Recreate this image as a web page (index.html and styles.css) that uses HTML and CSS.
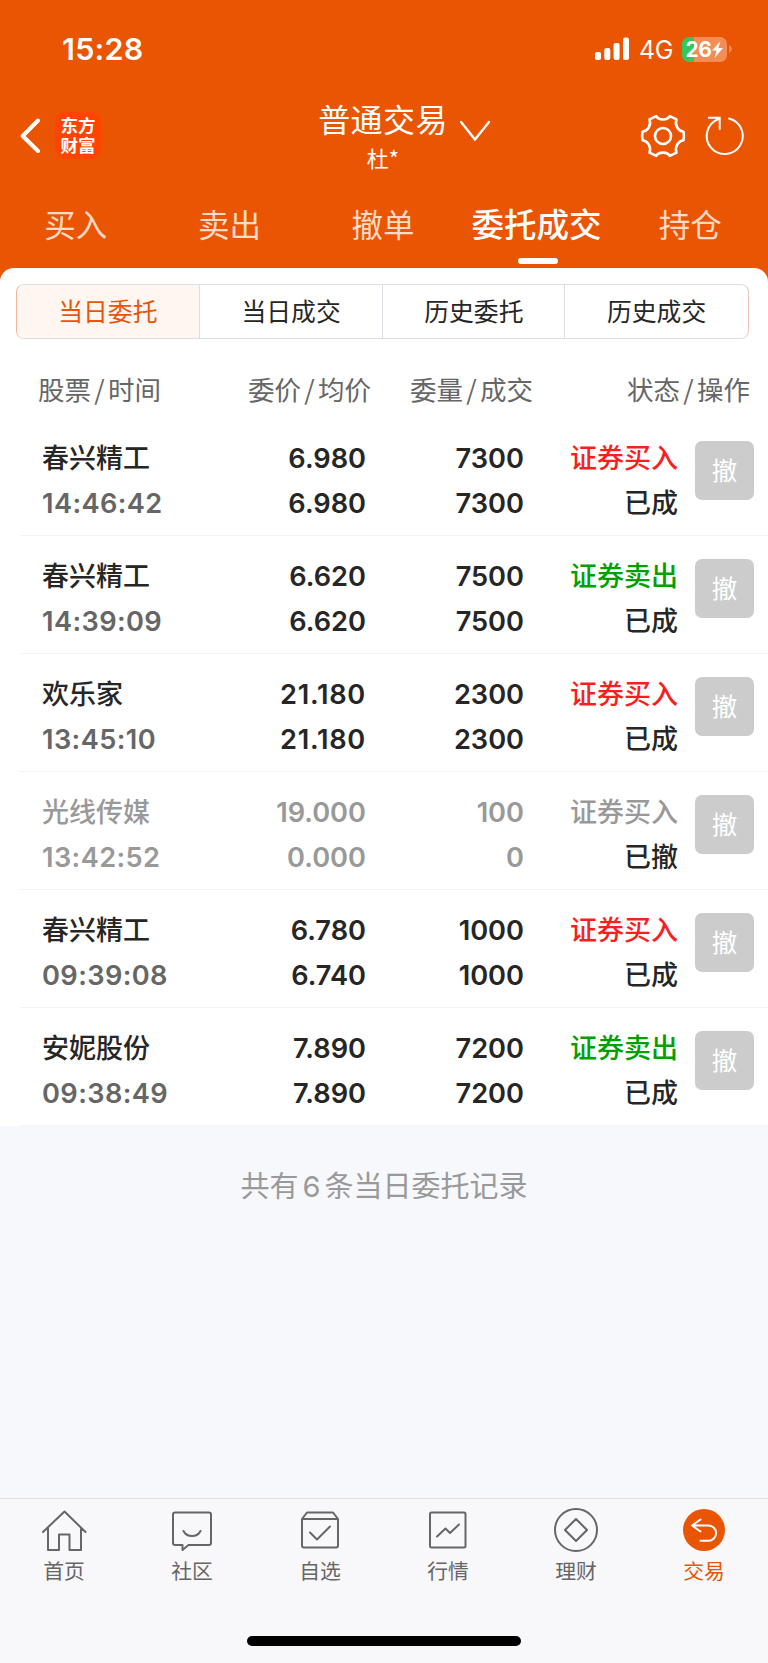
FILE: index.html
```html
<!DOCTYPE html>
<html lang="zh-CN">
<head>
<meta charset="utf-8">
<title>普通交易</title>
<link rel="stylesheet" href="styles.css">
</head>
<body>
<div class="app">
  <header class="top">
    <div class="status-bar">
      <span class="clock">15:28</span>
      <div class="status-right">
        <svg class="signal" width="34" height="24" viewBox="0 0 34 24" fill="#fff"><rect x="0" y="15" width="6" height="8" rx="2"/><rect x="9.3" y="11" width="6" height="12" rx="2"/><rect x="18.6" y="6" width="6" height="17" rx="2"/><rect x="28" y="0.5" width="6" height="22.5" rx="2"/></svg>
        <span class="network">4G</span>
        <div class="battery"><span class="battery-num">26</span><svg width="11" height="17" viewBox="0 0 11 17"><path d="M8.5 0L0 9.5h4.5L2.5 17 11 7H6.3z" fill="#fff"/></svg></div>
        <svg class="battery-cap" width="3" height="8" viewBox="0 0 3 8"><path d="M0 0Q3 1.5 3 4T0 8z" fill="#f38d55"/></svg>
      </div>
    </div>
    <div class="nav">
      <div class="nav-left">
        <svg width="20" height="36" viewBox="0 0 20 36"><path d="M18 2.5L2.7 18 18 33" fill="none" stroke="#fff" stroke-width="4" stroke-linecap="round" stroke-linejoin="round"/></svg>
        <div class="logo"><span>东方</span><span>财富</span></div>
      </div>
      <div class="nav-title"><span class="title">普通交易</span><span class="user">杜*</span></div>
      <svg class="chevron" width="32" height="22" viewBox="0 0 32 22"><path d="M2 2L16 19.500 30 2" fill="none" stroke="#fff" stroke-width="2.4" stroke-linecap="round" stroke-linejoin="round"/></svg>
      <div class="nav-right">
        <svg width="46" height="46" viewBox="0 0 46 46" fill="none" stroke="#fff" stroke-width="2.6" stroke-linejoin="round"><circle cx="23" cy="23" r="8"/><path d="M16.200 3.200C18.500 7.500 27.500 7.500 29.800 3.200L36.500 6.400C34.500 12 38 18 43.500 18.800Q44.300 23 43.500 27.200C38 28 34.500 34 36.500 39.600L29.800 42.800C27.500 38.500 18.500 38.500 16.200 42.800L9.500 39.600C11.500 34 8 28 2.500 27.200Q1.700 23 2.500 18.800C8 18 11.500 12 9.500 6.400Z"/></svg>
        <svg width="42" height="42" viewBox="0 0 42 42" fill="none" stroke="#fff" stroke-width="2" stroke-linecap="round"><path d="M25 5.500A18 18 0 1 1 14 6.300M4.800 4.700H15.700V16"/></svg>
      </div>
    </div>
    <nav class="tabs"><span>买入</span><span>卖出</span><span>撤单</span><span class="active">委托成交</span><span>持仓</span></nav>
  </header>
  <main class="card">
    <div class="segments"><span class="selected">当日委托</span><span>当日成交</span><span>历史委托</span><span>历史成交</span></div>
    <div class="head"><span>股票<i>/</i>时间</span><span>委价<i>/</i>均价</span><span>委量<i>/</i>成交</span><span>状态<i>/</i>操作</span></div>
    <div class="row"><div class="stock"><b>春兴精工</b><time>14:46:42</time></div><div class="num">6.980<br>6.980</div><div class="num">7300<br>7300</div><div class="state"><b class="buy">证券买入</b><b>已成</b></div><button class="cancel">撤</button></div>
    <div class="row"><div class="stock"><b>春兴精工</b><time>14:39:09</time></div><div class="num">6.620<br>6.620</div><div class="num">7500<br>7500</div><div class="state"><b class="sell">证券卖出</b><b>已成</b></div><button class="cancel">撤</button></div>
    <div class="row"><div class="stock"><b>欢乐家</b><time>13:45:10</time></div><div class="num wide">21.180<br>21.180</div><div class="num">2300<br>2300</div><div class="state"><b class="buy">证券买入</b><b>已成</b></div><button class="cancel">撤</button></div>
    <div class="row void"><div class="stock"><b>光线传媒</b><time>13:42:52</time></div><div class="num">19.000<br>0.000</div><div class="num">100<br>0</div><div class="state"><b class="buy">证券买入</b><b>已撤</b></div><button class="cancel">撤</button></div>
    <div class="row"><div class="stock"><b>春兴精工</b><time>09:39:08</time></div><div class="num">6.780<br>6.740</div><div class="num">1000<br>1000</div><div class="state"><b class="buy">证券买入</b><b>已成</b></div><button class="cancel">撤</button></div>
    <div class="row"><div class="stock"><b>安妮股份</b><time>09:38:49</time></div><div class="num">7.890<br>7.890</div><div class="num">7200<br>7200</div><div class="state"><b class="sell">证券卖出</b><b>已成</b></div><button class="cancel">撤</button></div>
  </main>
  <p class="summary">共有<i>6</i>条当日委托记录</p>
  <footer class="bottom">
    <div class="items">
      <div class="item"><svg viewBox="0 0 48 48"><path d="M3 25L24.500 4.500 45.500 25M8 21.500V43H19V27.500H29.500V43H41V21.500"/></svg><span>首页</span></div>
      <div class="item"><svg viewBox="0 0 48 48"><path d="M7 5.500H41Q43 5.500 43 7.500V36Q43 38 41 38H20.500L14.500 43V38H7Q5 38 5 36V7.500Q5 5.500 7 5.500ZM15.500 24Q18 29 24 29T32.500 24"/></svg><span>社区</span></div>
      <div class="item"><svg viewBox="0 0 48 48"><path d="M6 12L11 5.500H37L42 12V38.500Q42 40.500 40 40.500H8Q6 40.500 6 38.500ZM6 12H42M14 25.500L21 32.500 34 19.500"/></svg><span>自选</span></div>
      <div class="item"><svg viewBox="0 0 48 48"><rect x="6" y="5.500" width="35.500" height="35" rx="1.500"/><path d="M13 29.500L21.500 21.500 26 26 35 17.500"/></svg><span>行情</span></div>
      <div class="item"><svg viewBox="0 0 48 48"><circle cx="24" cy="23" r="21"/><path d="M24 12L35 23 24 34 13 23Z"/></svg><span>理财</span></div>
      <div class="item on"><svg viewBox="0 0 48 48"><circle cx="24" cy="23" r="21" fill="#ea5504" stroke="none"/><path stroke="#fff" d="M20.500 12.500L12 18.500 20.500 24.500M12.500 18.500H28.500A7.600 7.600 0 0 1 28.500 33.700H20.500"/></svg><span>交易</span></div>
    </div>
    <div class="home-bar"></div>
  </footer>
</div>
</body>
</html>
```
FILE: styles.css
```css
* { box-sizing: border-box; }
body { margin: 0; background: #f6f8fb; font-family: "Noto Sans CJK SC", sans-serif; color: #262626; }
i { font-style: normal; }
svg { display: block; flex: none; }
.app { width: 768px; height: 1663px; display: flex; flex-direction: column; overflow: hidden; background: linear-gradient(#ea5504 300px, #f6f8fb 300px); }
.top { height: 268px; color: #fff; display: flex; flex-direction: column; }
.status-bar { height: 98px; display: flex; justify-content: space-between; padding: 0 36px 0 62px; }
.clock { font: 600 30.500px/98px Inter, sans-serif; letter-spacing: .25px; }
.status-right { display: flex; align-items: center; }
.signal { margin: -1px 10px 0 0; }
.network { font: 400 25px/98px Inter, sans-serif; width: 33px; margin-right: 10px; margin-top: 2px; letter-spacing: -.5px; }
.battery { width: 45px; height: 25px; border-radius: 7px; background: linear-gradient(90deg, #34c759 12px, #f38d55 12px); display: flex; align-items: center; justify-content: center; gap: 1px; }
.battery-num { font: 700 21px/25px Inter, sans-serif; letter-spacing: -.5px; }
.battery-cap { margin-left: 2px; }
.nav { height: 86px; display: grid; grid-template-columns: 314px 138px 40px 1fr; }
.nav-left { display: flex; align-items: flex-start; padding: 20px 0 0 20px; }
.nav-left svg { margin-right: 15px; }
.logo { width: 46px; height: 47px; margin-top: -6px; border-radius: 10px; background: #ff4400; display: flex; flex-direction: column; align-items: center; padding-top: 3px; font-weight: 700; font-size: 17.500px; line-height: 20px; }
.nav-title { display: flex; flex-direction: column; align-items: center; }
.title { font-size: 32px; line-height: 40px; letter-spacing: .4px; }
.user { font-size: 22px; line-height: 38px; }
.chevron { margin: 22px 0 0 7px; }
.nav-right { display: flex; justify-content: flex-end; align-items: flex-start; gap: 18px; padding: 15px 22px 0 0; }
.tabs { flex: 1; display: grid; grid-template-columns: repeat(5, 1fr); text-align: center; font-size: 31.500px; line-height: 78px; color: #ffdac5; white-space: nowrap; margin: 0 1px 0 -1px; }
.tabs .active { color: #fff; font-weight: 500; font-size: 32.500px; display: flex; flex-direction: column; align-items: center; }
.tabs .active::after { content: ""; width: 40px; height: 6px; border-radius: 3px; background: #fff; margin: -4px 0 0 2px; }
.card { background: #fff; border-radius: 14px 14px 0 0; padding-top: 16px; height: 858px; }
.segments { margin: 0 19px 0 16px; height: 55px; display: grid; grid-template-columns: repeat(4, 1fr); border: 1.500px solid #dcdee6; border-radius: 8px; overflow: hidden; text-align: center; font-size: 24.800px; line-height: 51px; }
.segments span + span { border-left: 1.500px solid #dcdee6; }
.segments span { margin-left: -1px; }
.segments .selected { background: #fff5f1; color: #ea5504; }
.segments { border-left-color: #eeb59a; border-right-color: #eec5b4; }
.head { height: 79px; padding-left: 38px; display: grid; grid-template-columns: 210px 162px 217px 1fr; font-size: 26.500px; line-height: 99px; color: #666; white-space: nowrap; }
.head i { padding: 0 3.300px; }
.row { height: 118px; margin-left: 20px; padding-left: 22px; display: grid; grid-template-columns: 162px 162px 158px 154px 76px; border-bottom: 1.500px solid #f2f3f5; line-height: 45px; font-size: 27px; padding-top: 16px; }
.stock, .state { display: flex; flex-direction: column; white-space: nowrap; }
b { font-weight: 500; }
time, .num { font-family: Inter, sans-serif; font-size: 27.200px; }
time { font-weight: 600; color: #666; letter-spacing: .4px; padding-top: 2px; }
.num { text-align: right; font-weight: 600; padding-top: 2px; }
.num.wide { letter-spacing: .75px; }
.state { align-items: flex-end; }
.buy { color: #fa1e1e; }
.sell { color: #00a000; }
.cancel { width: 59px; height: 59px; margin: 7px 0 0 17px; padding: 0 0 3px; border: 0; border-radius: 7px; background: #ccc; color: #fff; font: 25.500px/56px "Noto Sans CJK SC", sans-serif; }
.void .stock b, .void time, .void .num, .void .buy { color: #999; }
.summary { margin: 0; height: 372px; text-align: center; font-size: 29px; line-height: 116px; color: #999; }
.summary i { font-family: Inter, sans-serif; padding: 0 4px; }
.bottom { height: 165px; background: #f8f8fb; border-top: 1px solid #dedfe2; display: flex; flex-direction: column; align-items: center; }
.items { width: 100%; height: 137px; display: grid; grid-template-columns: repeat(6, 1fr); padding-top: 8px; }
.item { display: flex; flex-direction: column; align-items: center; color: #666; font-size: 20.800px; line-height: 31px; }
.item svg { width: 48px; height: 48px; fill: none; stroke: #666; stroke-width: 2; stroke-linecap: round; stroke-linejoin: round; }
.item.on { color: #ea5504; }
.home-bar { width: 274px; height: 10px; border-radius: 5px; background: #000; }
```
